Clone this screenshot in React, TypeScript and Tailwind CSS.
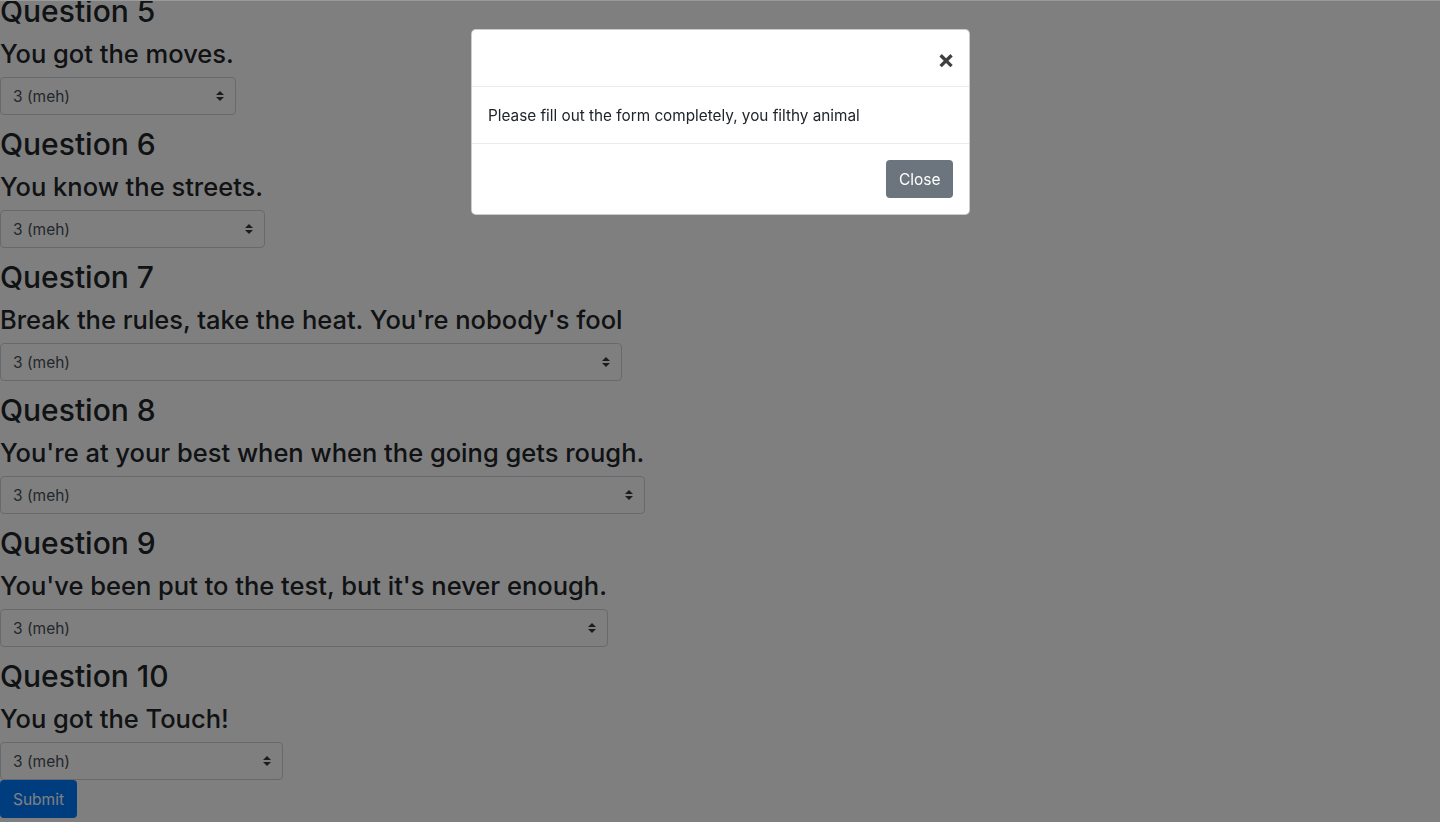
import React from "react";

const questions = [
  { n: 5, text: "You got the moves.", w: "w-[236px]" },
  { n: 6, text: "You know the streets.", w: "w-[265px]" },
  { n: 7, text: "Break the rules, take the heat. You're nobody's fool", w: "w-[622px]" },
  { n: 8, text: "You're at your best when when the going gets rough.", w: "w-[645px]" },
  { n: 9, text: "You've been put to the test, but it's never enough.", w: "w-[608px]" },
  { n: 10, text: "You got the Touch!", w: "w-[283px]" },
];

function SelectArrow() {
  return (
    <svg
      className="pointer-events-none absolute right-[12px] top-1/2 -translate-y-1/2"
      width="8"
      height="10"
      viewBox="0 0 4 5"
    >
      <path fill="#343a40" d="M2 0L0 2h4zm0 5L0 3h4z" />
    </svg>
  );
}

function Question({ q, last }: { q: (typeof questions)[number]; last: boolean }) {
  return (
    <div className={last ? "" : "mb-[11px]"}>
      <h2 className="mb-[10px] text-[30px] font-medium leading-[36px] text-[#212529]">
        Question {q.n}
      </h2>
      <h3 className="mb-[8px] whitespace-nowrap text-[25.5px] font-medium leading-[30px] text-[#212529]">
        {q.text}
      </h3>
      <div className={"relative " + q.w}>
        <select
          defaultValue="3"
          className="block h-[38px] w-full appearance-none rounded-[4px] border border-[#ced4da] bg-white pt-[7px] pb-[5px] pl-[12px] pr-[28px] text-[15.5px] leading-[1.5] text-[#495057]"
        >
          <option value="1">1 (nope)</option>
          <option value="2">2</option>
          <option value="3">3 (meh)</option>
          <option value="4">4</option>
          <option value="5">5 (yes)</option>
        </select>
        <SelectArrow />
      </div>
    </div>
  );
}

export default function App() {
  return (
    <div className="relative min-h-[822px] overflow-hidden bg-white font-['Inter','Liberation_Sans',sans-serif]">
      {/* form, scrolled to the bottom */}
      <form className="mt-[-7px] flex flex-col items-start">
        {questions.map((q, i) => (
          <Question key={q.n} q={q} last={i === questions.length - 1} />
        ))}
        <button
          type="button"
          className="h-[38px] rounded-[4px] bg-[#007bff] px-[13px] pt-[1px] text-[15.5px] leading-[1.5] text-white"
        >
          Submit
        </button>
      </form>

      {/* backdrop */}
      <div className="fixed inset-0 border-t border-[#9a9a9a] bg-black/50" />

      {/* modal */}
      <div className="fixed inset-0 flex justify-center pt-[29px]">
        <div className="ml-[1px] flex h-fit w-[499px] flex-col rounded-[5px] border border-black/20 bg-white">
          <div className="flex items-start justify-between border-b border-[#e9ecef] p-[16px]">
            <h5 className="text-[20px] font-medium leading-[1.5]" />
            <button
              type="button"
              className="-m-[16px] ml-auto pt-[18px] pb-[14px] pl-[16px] pr-[14px] text-[26px] font-bold leading-[24px] text-black opacity-75"
            >
              ×
            </button>
          </div>
          <div className="px-[16px] pt-[17px] pb-[15px] text-[15.3px] leading-[24px] text-[#212529]">
            Please fill out the form completely, you filthy animal
          </div>
          <div className="flex justify-end border-t border-[#e9ecef] p-[12px]">
            <button
              type="button"
              className="m-[4px] h-[38px] rounded-[4px] bg-[#6c757d] px-[12.5px] pt-[1px] text-[15.5px] leading-[1.5] text-white"
            >
              Close
            </button>
          </div>
        </div>
      </div>
    </div>
  );
}
